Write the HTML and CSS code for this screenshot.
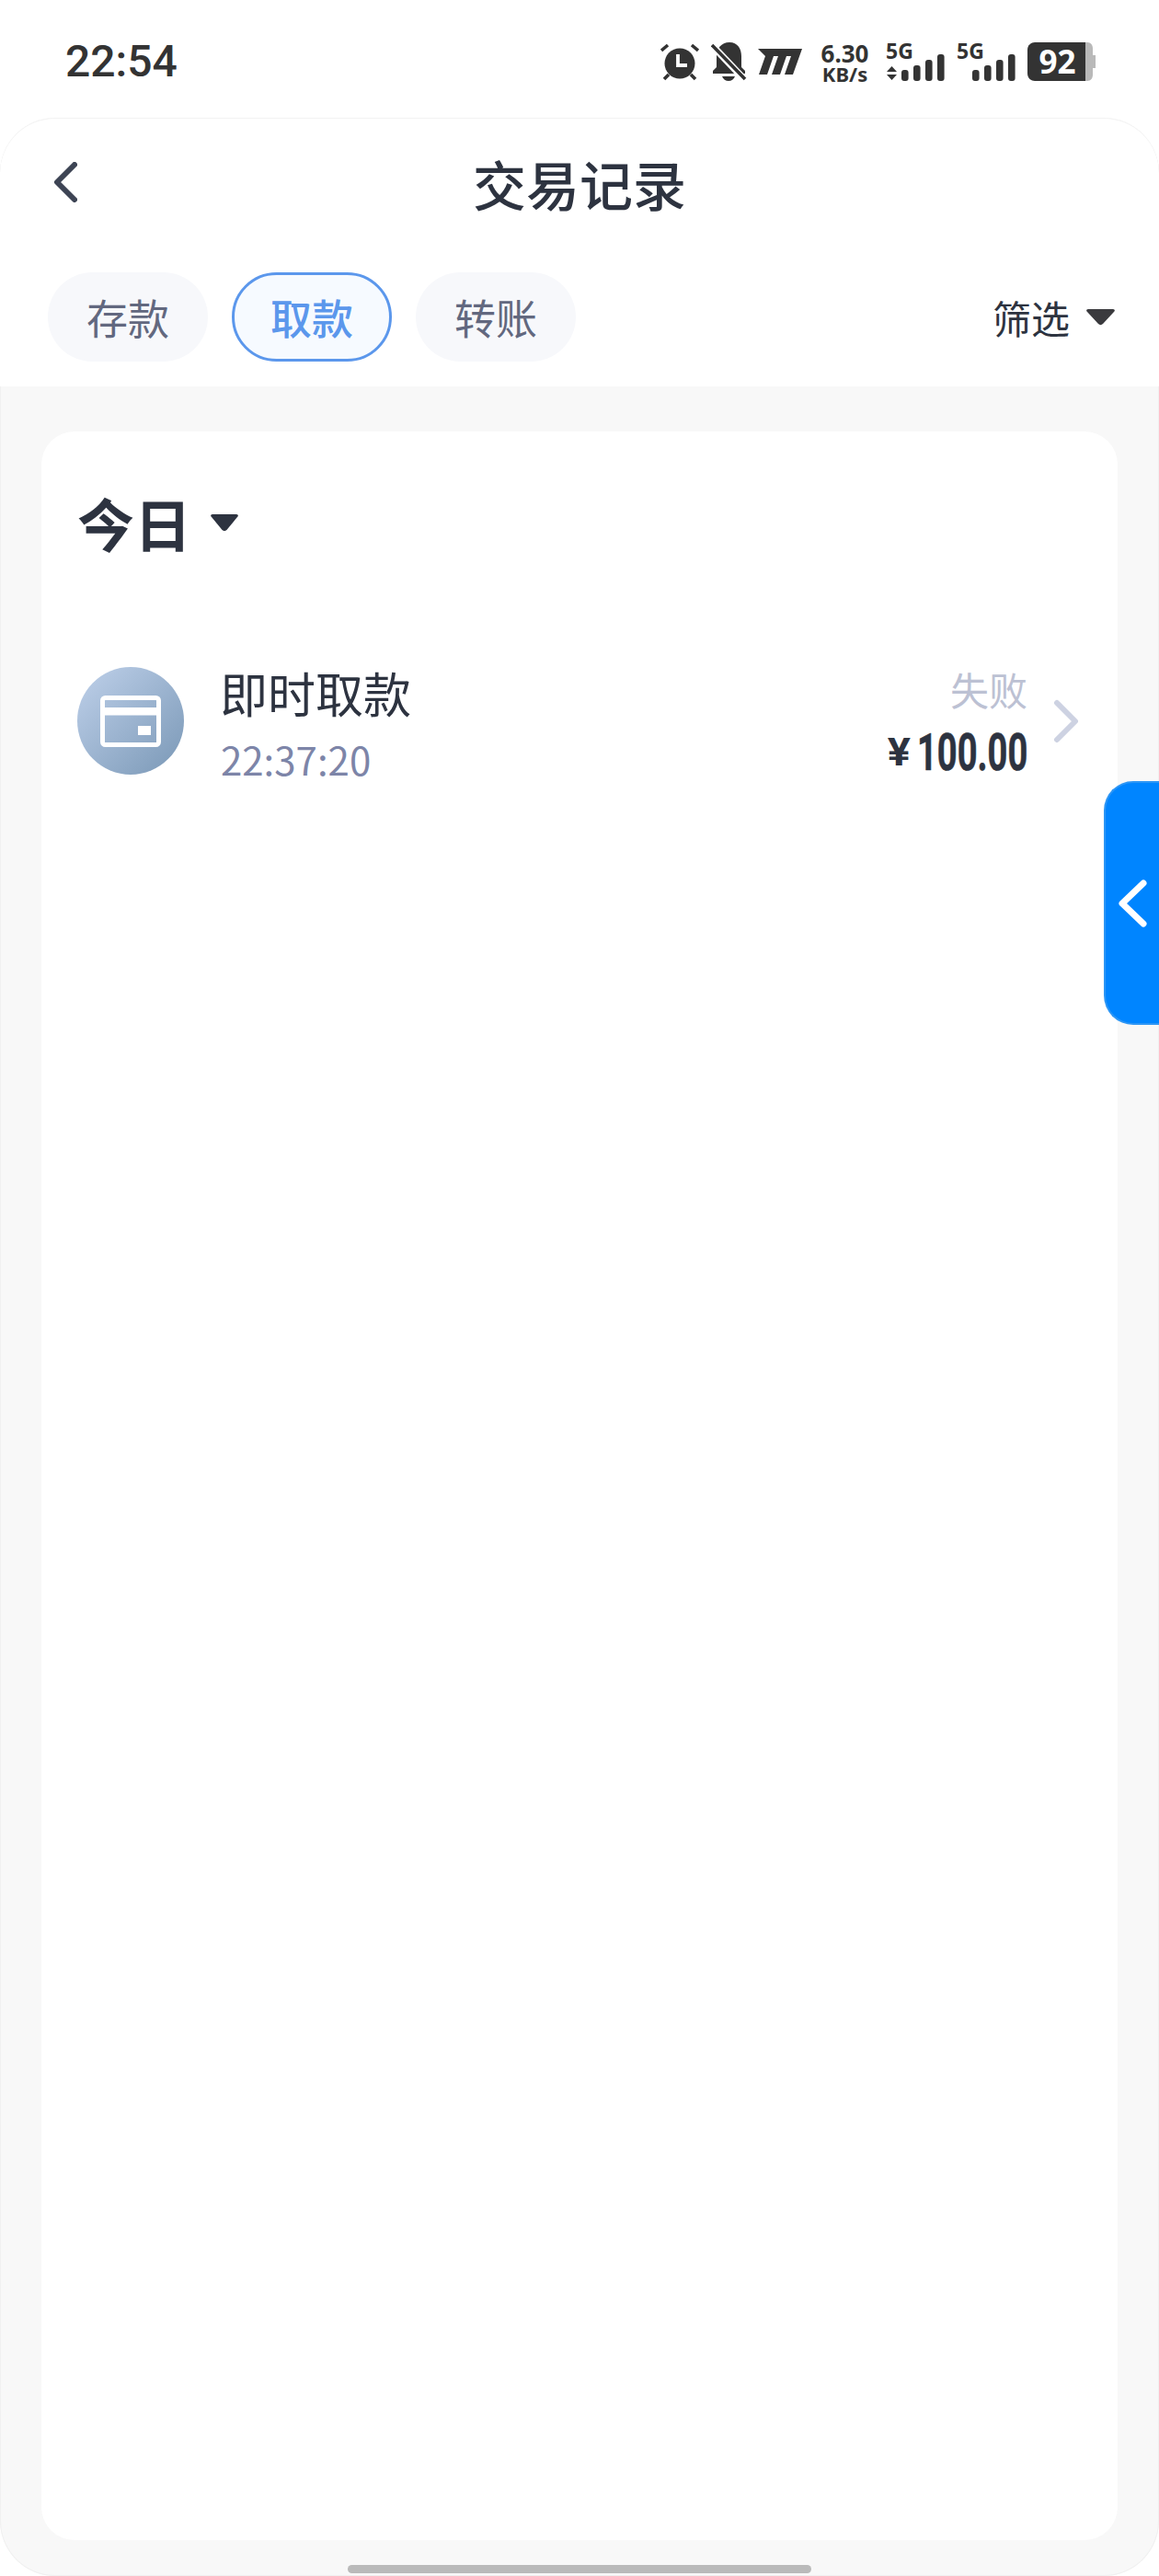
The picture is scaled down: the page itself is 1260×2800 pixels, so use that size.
FILE: index.html
```html
<!DOCTYPE html>
<html lang="zh-CN">
<head>
<meta charset="utf-8">
<title>交易记录</title>
<link rel="stylesheet" href="styles.css">
</head>
<body>
<div class="phone">
  <div class="status">
    <span class="clock">22:54</span>
    <div class="status-icons">
      <svg class="ic-alarm" width="42" height="42" viewBox="0 0 42 42"><path d="M1 9 8 3M41 9 34 3M4 40l5-5M38 40l-5-5" stroke="#333" stroke-width="3.600" fill="none"/><circle cx="21" cy="23" r="16.500" fill="#333"/><path d="M19 13v12h10" stroke="#fff" stroke-width="3.800" fill="none"/></svg>
      <svg class="ic-bell" width="39" height="42" viewBox="0 0 39 42"><path d="M20 0C11 0 6 7 6 15v12l-4 4v3h35v-3l-4-4V15C33 7 29 0 20 0z" fill="#333"/><path d="M0 2 37 41" stroke="#fff" stroke-width="7.500"/><path d="M1 3 37 40" stroke="#333" stroke-width="3.600"/><path d="M12 37h14c-1 3-4 5-7 5s-6-2-7-5z" fill="#333"/></svg>
      <svg class="ic-m" width="48" height="28" viewBox="0 0 48 28"><path d="M0 0H48L38 28H29L36 8H31L24 28H15L22 8H17L10 28H1L8 8Z" fill="#333"/></svg>
      <div class="speed"><span class="speed-num">6.30</span><span class="speed-unit">KB/s</span></div>
      <div class="sig">
        <span class="sig-label">5G</span>
        <svg width="64" height="42" viewBox="0 0 64 42"><path d="M6.500 26l-5.500 6h11zM6.500 41l-5.500-6h11z" fill="#333"/><rect x="17" y="30" width="7.600" height="12" rx="3" fill="#333"/><rect x="30" y="25" width="7.600" height="17" rx="3" fill="#333"/><rect x="43" y="19" width="7.600" height="23" rx="3" fill="#333"/><rect x="56" y="13" width="7.600" height="29" rx="3" fill="#333"/></svg>
      </div>
      <div class="sig">
        <span class="sig-label">5G</span>
        <svg width="64" height="42" viewBox="0 0 64 42"><rect x="17" y="30" width="7.600" height="12" rx="3" fill="#333"/><rect x="30" y="25" width="7.600" height="17" rx="3" fill="#333"/><rect x="43" y="19" width="7.600" height="23" rx="3" fill="#333"/><rect x="56" y="13" width="7.600" height="29" rx="3" fill="#333"/></svg>
      </div>
      <div class="batt">
        <svg width="74" height="42" viewBox="0 0 74 42"><path d="M63 0h2c4 0 6 3 6 7v7h3v14h-3v7c0 4-2 7-6 7h-2z" fill="#b9b9b9"/><path d="M8 0h55v42H8c-4 0-8-3-8-8V8c0-5 4-8 8-8z" fill="#333"/></svg>
        <span class="batt-label">92</span>
      </div>
    </div>
  </div>

  <div class="sheet">
    <header class="top">
      <div class="nav">
        <svg class="back" width="26" height="44" viewBox="0 0 26 44"><path d="M23 3 4 22l19 19" fill="none" stroke="#3d4454" stroke-width="6" stroke-linecap="round" stroke-linejoin="round"/></svg>
        <h1 class="title">交易记录</h1>
      </div>
      <div class="tabs">
        <div class="tab-group">
          <span class="tab">存款</span>
          <span class="tab tab-active">取款</span>
          <span class="tab">转账</span>
        </div>
        <div class="filter">
          <span>筛选</span>
          <svg width="31" height="18" viewBox="0 0 31 18"><path d="M2 0h27c2 0 2.500 2 1 3L18 16c-1.500 1.500-3.500 1.500-5 0L1 3C-.5 2 0 0 2 0z" fill="#3a3a3e"/></svg>
        </div>
      </div>
    </header>

    <main class="content">
      <section class="card">
        <div class="day">
          <span>今日</span>
          <svg width="30" height="19" viewBox="0 0 30 19"><path d="M2 0h26c2 0 2.500 2 1 3L17.500 17c-1.500 1.500-3.500 1.500-5 0L1 3C-.5 2 0 0 2 0z" fill="#2d3340"/></svg>
        </div>
        <div class="record">
          <div class="avatar">
            <svg width="66" height="56" viewBox="0 0 66 56"><rect x="2.500" y="2.500" width="61" height="51" rx="3" fill="none" stroke="#fff" stroke-width="5"/><rect x="3" y="13" width="60" height="8.500" fill="#fff"/><rect x="41" y="33" width="14" height="10" fill="#fff"/></svg>
          </div>
          <div class="info">
            <div class="name">即时取款</div>
            <div class="time">22:37:20</div>
          </div>
          <div class="result">
            <div class="state">失败</div>
            <div class="amount"><span class="yen">¥</span><span class="value">100.00</span></div>
          </div>
          <svg class="go" width="28" height="48" viewBox="0 0 28 48"><path d="M4 4l20 20L4 44" fill="none" stroke="#cdd2e2" stroke-width="6" stroke-linecap="round" stroke-linejoin="round"/></svg>
        </div>
      </section>
    </main>
    <div class="home-bar"></div>
  </div>

  <div class="float-tab">
    <svg width="32" height="52" viewBox="0 0 32 52"><path d="M28 4 5 26l23 22" fill="none" stroke="#fff" stroke-width="7" stroke-linecap="round" stroke-linejoin="round"/></svg>
  </div>
</div>
</body>
</html>
```

FILE: styles.css
```css
* { box-sizing: border-box; }
html, body { margin: 0; padding: 0; }
body {
  background: #fff;
  font-family: "Noto Sans CJK SC", "Noto Sans", sans-serif;
  color: #2d3340;
}
.phone {
  position: relative;
  width: 1260px;
  height: 2800px;
  overflow: hidden;
  display: flex;
  flex-direction: column;
}
.status {
  height: 128px;
  flex: none;
  display: flex;
  justify-content: space-between;
  padding: 46px 69px 0 71px;
  color: #333;
}
.clock {
  font-family: Roboto, sans-serif;
  font-weight: 500;
  font-size: 48px;
  line-height: 42px;
}
.status-icons {
  display: flex;
  align-items: flex-start;
  height: 42px;
}
.ic-alarm { margin-right: 13px; }
.ic-bell { margin-right: 12px; }
.ic-m { margin-top: 7px; margin-right: 20px; }
.speed {
  width: 53px;
  margin-right: 18px;
  display: flex;
  flex-direction: column;
  align-items: center;
  font-family: "Noto Sans", sans-serif;
  font-weight: 700;
  color: #333;
}
.speed-num { font-size: 26px; line-height: 24px; white-space: nowrap; }
.speed-unit { font-size: 22px; line-height: 20px; white-space: nowrap; }
.sig {
  position: relative;
  width: 64px;
  height: 42px;
  margin-right: 13px;
}
.sig svg { display: block; }
.sig-label {
  position: absolute;
  left: 0;
  top: -1px;
  font-family: "Noto Sans", sans-serif;
  font-weight: 700;
  font-size: 23px;
  line-height: 20px;
  color: #333;
}
.batt {
  position: relative;
  width: 74px;
  height: 42px;
}
.batt svg { display: block; }
.batt-label {
  position: absolute;
  left: 0;
  top: 0;
  width: 65px;
  text-align: center;
  font-family: "Noto Sans", sans-serif;
  font-weight: 700;
  font-size: 35px;
  line-height: 42px;
  color: #fff;
}
.sheet {
  flex: 1;
  display: flex;
  flex-direction: column;
  position: relative;
  background: #f8f8f8;
  border-radius: 60px;
  overflow: hidden;
  box-shadow: inset 0 0 0 1px #f0f0f0;
}
.top {
  flex: none;
  height: 292px;
  background: #fff;
  border-radius: 60px 60px 0 0;
  box-shadow: inset 0 1px 0 #f2f2f2;
  display: flex;
  flex-direction: column;
}
.nav {
  position: relative;
  height: 168px;
  padding-bottom: 27px;
  display: flex;
  align-items: center;
  justify-content: center;
}
.back {
  position: absolute;
  left: 58px;
  top: 48px;
}
.title {
  margin: 0;
  font-size: 58px;
  line-height: 80px;
  font-weight: 500;
  color: #2d3340;
}
.tabs {
  display: flex;
  justify-content: space-between;
  align-items: center;
  padding: 0 48px 0 52px;
}
.tab-group {
  display: flex;
  gap: 26px;
}
.tab {
  width: 174px;
  height: 97px;
  display: flex;
  align-items: center;
  justify-content: center;
  border-radius: 49px;
  background: #f7f8fb;
  font-size: 45px;
  color: #62687f;
}
.tab-active {
  background: #f6faff;
  border: 3px solid #5b97ec;
  color: #5b97ec;
  font-weight: 500;
}
.filter {
  display: flex;
  align-items: center;
  gap: 18px;
  font-size: 42px;
  color: #2d3340;
}
.content {
  flex: 1;
  display: flex;
  flex-direction: column;
  padding: 49px 45px 39px;
}
.card {
  flex: 1;
  background: #fff;
  border-radius: 36px;
  padding: 61px 42px 0 39px;
}
.day {
  display: flex;
  align-items: center;
  gap: 21px;
  height: 76px;
  font-size: 62px;
  font-weight: 700;
  line-height: 76px;
  color: #2d3340;
}
.record {
  margin-top: 119px;
  display: flex;
  align-items: center;
  height: 117px;
}
.avatar {
  flex: none;
  width: 116px;
  height: 117px;
  border-radius: 50%;
  background: linear-gradient(135deg, #b8cbe5 10%, #7f9cba 92%);
  display: flex;
  align-items: center;
  justify-content: center;
}
.info {
  margin-left: 39px;
  margin-top: 4px;
  display: flex;
  flex-direction: column;
}
.name {
  font-size: 52px;
  line-height: 62px;
  color: #2d3340;
}
.time {
  font-size: 42px;
  line-height: 50px;
  margin-top: 16px;
  margin-left: 1px;
  color: #7d85a8;
}
.result {
  margin-left: auto;
  display: flex;
  flex-direction: column;
  align-items: flex-end;
}
.state {
  font-size: 42px;
  line-height: 50px;
  color: #bcc1d3;
}
.amount {
  display: flex;
  align-items: center;
  margin-top: 18px;
  height: 52px;
  font-weight: 700;
  color: #2d3340;
}
.yen {
  font-family: Roboto, sans-serif;
  font-size: 42px;
  margin-right: 8px;
  transform: scaleX(1.12);
}
.value {
  display: inline-block;
  font-family: Roboto, sans-serif;
  font-size: 56px;
  line-height: 52px;
  width: 120px;
  white-space: nowrap;
  transform: scaleX(0.68);
  transform-origin: left center;
  -webkit-text-stroke: 0.6px #2d3340;
}
.go {
  flex: none;
  margin-left: 28px;
}
.home-bar {
  position: absolute;
  left: 378px;
  bottom: 3px;
  width: 504px;
  height: 9px;
  border-radius: 5px;
  background: #bababa;
}
.float-tab {
  position: absolute;
  left: 1200px;
  top: 849px;
  width: 60px;
  height: 265px;
  background: #0085ff;
  border: 2px solid #2d96f5;
  border-right: 0;
  border-radius: 32px 0 0 32px;
  display: flex;
  align-items: center;
  padding-left: 13px;
}
```
